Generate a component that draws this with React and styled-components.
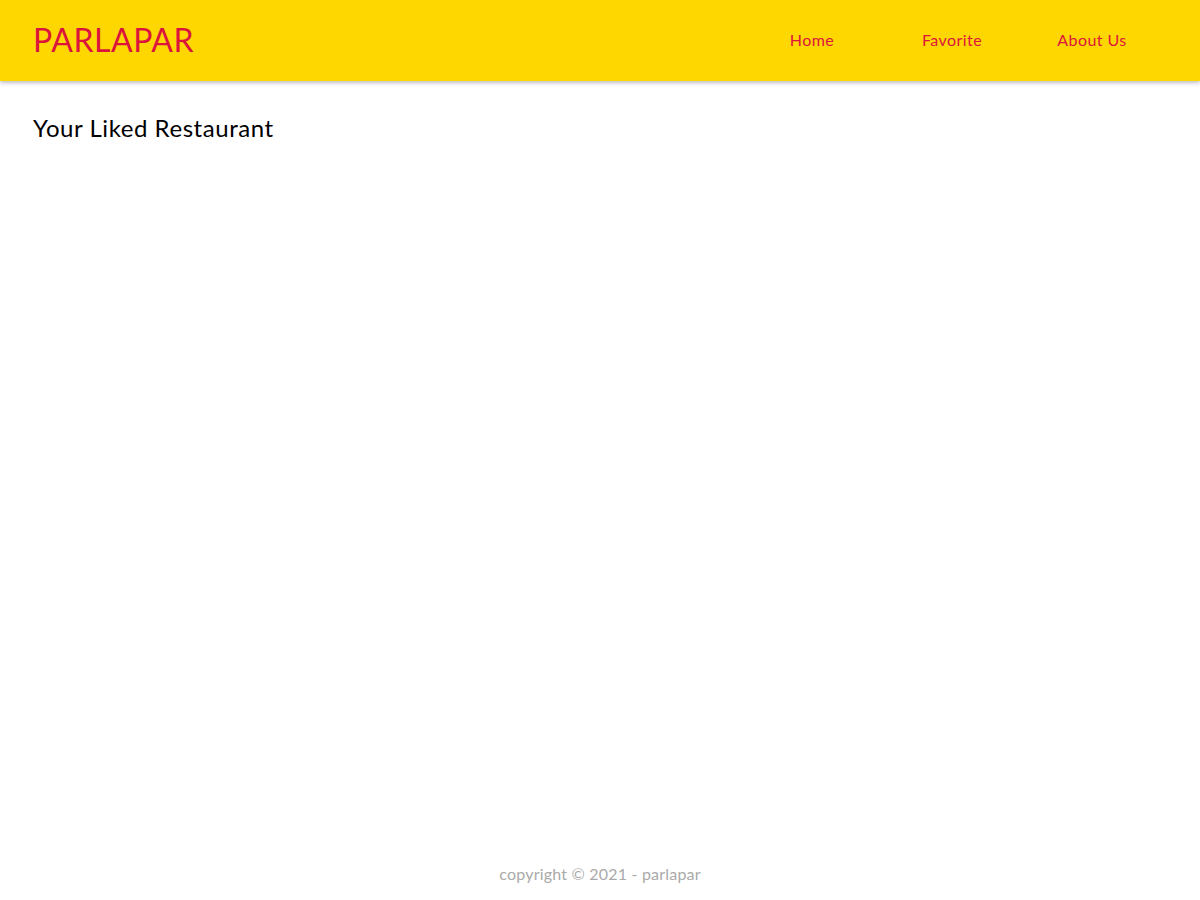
import React from "react";
import styled, { createGlobalStyle } from "styled-components";

const GlobalStyle = createGlobalStyle`
  * { box-sizing: border-box; }
  html, body { margin: 0; padding: 0; }
  body {
    font-family: Lato, "Open Sans", sans-serif;
    background: #ffffff;
  }
`;

const Page = styled.div`
  min-height: 100vh;
  display: flex;
  flex-direction: column;
`;

const Header = styled.header`
  height: 81px;
  background: #ffd700;
  display: flex;
  align-items: center;
  justify-content: space-between;
  padding: 0 38px 2px 33px;
  box-shadow: 0 2px 4px rgba(0, 0, 0, 0.25);
`;

const Brand = styled.h1`
  margin: 0;
  font-size: 32px;
  font-weight: 400;
  color: #dc143c;
  letter-spacing: 0.55px;
`;

const Nav = styled.nav`
  display: flex;
`;

const NavLink = styled.a`
  width: 140px;
  text-align: center;
  font-size: 16px;
  color: #dc143c;
  text-decoration: none;
  letter-spacing: 0.45px;
`;

const Main = styled.main`
  flex: 1;
  padding: 32px 33px;
`;

const Title = styled.h2`
  margin: 0;
  font-size: 24px;
  font-weight: 400;
  color: #000;
  letter-spacing: 0.55px;
`;

const Footer = styled.footer`
  text-align: center;
  padding: 0 0 17px;
  font-size: 16px;
  color: #aaaaaa;
  letter-spacing: 0.2px;
`;

export default function App() {
  return (
    <>
      <GlobalStyle />
      <Page>
        <Header>
          <Brand>PARLAPAR</Brand>
          <Nav>
            <NavLink href="#">Home</NavLink>
            <NavLink href="#">Favorite</NavLink>
            <NavLink href="#">About Us</NavLink>
          </Nav>
        </Header>
        <Main>
          <Title>Your Liked Restaurant</Title>
        </Main>
        <Footer>copyright © 2021 - parlapar</Footer>
      </Page>
    </>
  );
}
